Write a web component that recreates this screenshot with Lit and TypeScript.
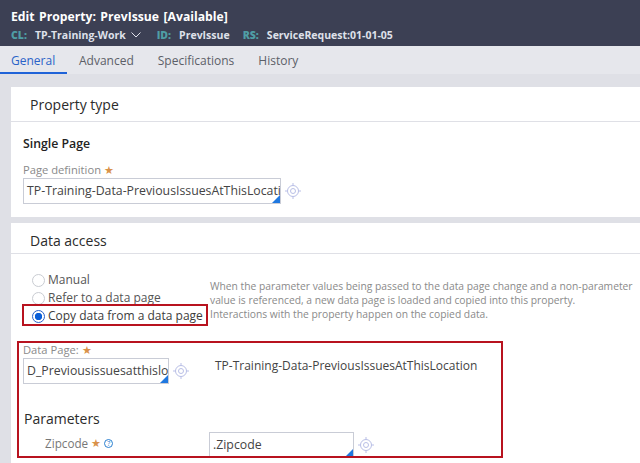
import { LitElement, html, css } from 'lit';
import { customElement } from 'lit/decorators.js';

const target = html`<svg class="target" width="16" height="16" viewBox="0 0 16 16" fill="none" stroke="#b9bfe6" stroke-width="1">
  <circle cx="8" cy="8" r="5.5"></circle>
  <circle cx="8" cy="8" r="2.5"></circle>
  <path d="M8 0v2.5M8 13.5V16M0 8h2.5M13.5 8H16"></path>
</svg>`;

@customElement('app-root')
export class AppRoot extends LitElement {
  static styles = css`
    :host {
      display: block;
      width: 640px;
      height: 463px;
      overflow: hidden;
      background: #dfe0e6;
      font-family: 'Open Sans', sans-serif;
      color: #3c3c3c;
    }

    /* header */
    .head {
      height: 46px;
      box-sizing: border-box;
      padding: 8px 11px 0;
      background: #3c4054;
      color: #fff;
    }
    .title {
      font-size: 12.2px;
      line-height: 17px;
      font-weight: 700;
      word-spacing: 1.3px;
    }
    .meta {
      display: flex;
      align-items: center;
      margin-top: 3px;
      font-size: 10.5px;
      line-height: 14px;
      font-weight: 700;
      color: #dfe1ea;
      white-space: nowrap;
    }
    .meta b {
      color: #4f9ea6;
      margin-right: 8px;
    }
    .meta svg {
      margin: 0 16px 0 5px;
    }
    .meta .id {
      margin-right: 13px;
    }

    /* tabs */
    .tabs {
      display: flex;
      height: 28px;
      background: #e6e7ec;
      font-size: 12px;
      color: #5c5f68;
    }
    .tab {
      padding: 6px 11px 0;
      margin-right: 2px;
      box-sizing: border-box;
    }
    .tab.on {
      color: #2a63c8;
      border-bottom: 2px solid #1f63d8;
      width: 67px;
      margin-right: 1px;
    }

    /* panels */
    .panels {
      display: flex;
      flex-direction: column;
      gap: 6px;
      padding: 13px 0 0 11px;
    }
    .panel {
      background: #fff;
    }
    .panel-title {
      height: 31px;
      padding: 8px 0 0 19px;
      box-sizing: border-box;
      font-size: 14px;
      line-height: 20px;
      color: #2b2b2b;
      border-bottom: 1px solid #dfe0e6;
    }
    .panel.first .panel-title {
      height: 35px;
    }
    .type {
      height: 95px;
      box-sizing: border-box;
      padding: 13px 0 0 12px;
    }
    .strong {
      font-size: 12.3px;
      line-height: 18px;
      font-weight: 600;
      color: #222;
    }
    .label {
      font-size: 11.2px;
      line-height: 16px;
      color: #8a8a8a;
    }
    .star {
      color: #d9924a;
      font-size: 11px;
    }
    .field-row {
      display: flex;
      align-items: center;
      gap: 4px;
    }
    .input {
      position: relative;
      box-sizing: border-box;
      height: 26px;
      padding: 0 3px;
      border: 1px solid #c9ccd6;
      background: #fff;
      font-size: 12.3px;
      line-height: 24px;
      color: #444;
      white-space: nowrap;
      overflow: hidden;
    }
    .input::after {
      content: '';
      position: absolute;
      right: 0;
      bottom: 0;
      border-style: solid;
      border-width: 0 0 8px 8px;
      border-color: transparent transparent #1f78e0 transparent;
    }
    .type .label {
      margin-top: 9px;
    }
    .type .input {
      width: 258px;
    }
    .target {
      flex: none;
    }

    /* data access */
    .access {
      position: relative;
      height: 209px;
    }
    .choice {
      display: flex;
      padding: 17px 0 0 21px;
    }
    .radios {
      width: 178px;
      flex: none;
      font-size: 12px;
      line-height: 18px;
      color: #555;
    }
    .radio {
      display: flex;
      align-items: center;
      gap: 3px;
      white-space: nowrap;
    }
    .dot {
      box-sizing: border-box;
      width: 13px;
      height: 13px;
      border-radius: 50%;
      border: 1px solid #c9ccd2;
      background: #fff;
      flex: none;
    }
    .dot.on {
      border-color: #2a63c8;
      background: radial-gradient(circle, #0b5fd8 0 3.4px, #fff 4px);
    }
    .radio.sel {
      color: #3c3c3c;
    }
    .help {
      margin-top: 8px;
      width: 430px;
      font-size: 10.3px;
      line-height: 14px;
      color: #8a8a8a;
      white-space: nowrap;
    }
    .page-row {
      display: flex;
      margin: 17px 0 0 12px;
    }
    .page-row .input {
      width: 146px;
    }
    .page-class {
      margin: 16px 0 0 26px;
      font-size: 12px;
      line-height: 16px;
      color: #444;
    }
    .params {
      margin: 25px 0 0 13px;
      font-size: 14px;
      line-height: 20px;
      color: #2b2b2b;
    }
    .zip {
      display: flex;
      align-items: flex-start;
      margin-top: 3px;
    }
    .zip-label {
      display: flex;
      align-items: center;
      gap: 3px;
      width: 198px;
      box-sizing: border-box;
      padding: 3px 0 0 34px;
      font-size: 11.7px;
      line-height: 16px;
      color: #777;
    }
    .zip .input {
      width: 145px;
    }
    .q {
      width: 9px;
      height: 9px;
      box-sizing: border-box;
      border: 1px solid #2a7fd0;
      border-radius: 50%;
      font-size: 7px;
      line-height: 7px;
      text-align: center;
      color: #2a7fd0;
    }

    /* red callouts drawn over the form */
    .mark {
      position: absolute;
      box-sizing: border-box;
      border: 2px solid #b8131f;
      pointer-events: none;
    }
    .mark.a {
      left: 11px;
      top: 50px;
      width: 186px;
      height: 22px;
    }
    .mark.b {
      left: 6px;
      top: 87px;
      width: 486px;
      height: 117px;
    }
  `;

  render() {
    return html`
      <div class="head">
        <div class="title">Edit Property: PrevIssue [Available]</div>
        <div class="meta">
          <b>CL:</b>TP-Training-Work
          <svg width="10" height="6" viewBox="0 0 10 6" fill="none" stroke="#dfe1ea" stroke-width="1"><path d="M.5 .5 5 5 9.5 .5"></path></svg>
          <b>ID:</b><span class="id">PrevIssue</span>
          <b>RS:</b>ServiceRequest:01-01-05
        </div>
      </div>
      <div class="tabs">
        <div class="tab on">General</div>
        <div class="tab">Advanced</div>
        <div class="tab">Specifications</div>
        <div class="tab">History</div>
      </div>
      <div class="panels">
        <section class="panel first">
          <div class="panel-title">Property type</div>
          <div class="type">
            <div class="strong">Single Page</div>
            <div class="label">Page definition <span class="star">★</span></div>
            <div class="field-row">
              <div class="input">TP-Training-Data-PreviousIssuesAtThisLocation</div>
              ${target}
            </div>
          </div>
        </section>
        <section class="panel">
          <div class="panel-title">Data access</div>
          <div class="access">
            <div class="choice">
              <div class="radios">
                <div class="radio"><span class="dot"></span>Manual</div>
                <div class="radio"><span class="dot"></span>Refer to a data page</div>
                <div class="radio sel"><span class="dot on"></span>Copy data from a data page</div>
              </div>
              <div class="help">
                When the parameter values being passed to the data page change and a non-parameter<br />
                value is referenced, a new data page is loaded and copied into this property.<br />
                Interactions with the property happen on the copied data.
              </div>
            </div>
            <div class="page-row">
              <div>
                <div class="label">Data Page: <span class="star">★</span></div>
                <div class="field-row">
                  <div class="input">D_Previousissuesatthislocation</div>
                  ${target}
                </div>
              </div>
              <div class="page-class">TP-Training-Data-PreviousIssuesAtThisLocation</div>
            </div>
            <div class="params">Parameters</div>
            <div class="zip">
              <div class="zip-label">Zipcode <span class="star">★</span><span class="q">?</span></div>
              <div class="field-row">
                <div class="input">.Zipcode</div>
                ${target}
              </div>
            </div>
            <div class="mark a"></div>
            <div class="mark b"></div>
          </div>
        </section>
      </div>
    `;
  }
}
